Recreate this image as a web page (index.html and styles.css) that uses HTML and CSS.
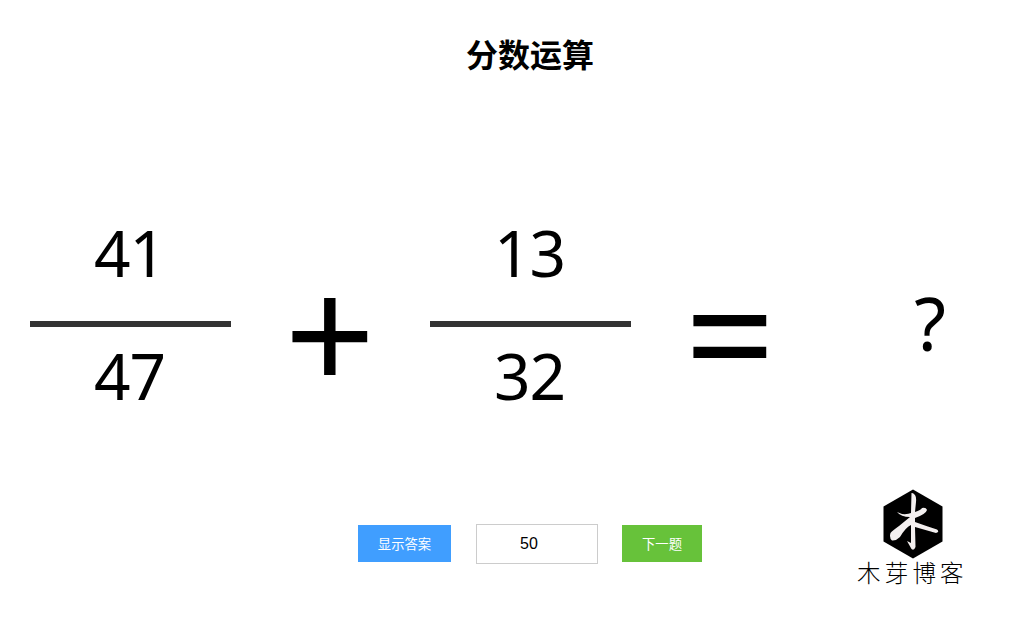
FILE: index.html
```html
<!DOCTYPE html>
<html lang="zh-CN">
<head>
<meta charset="utf-8">
<title>分数运算</title>
<link rel="stylesheet" href="styles.css">
</head>
<body>
<main class="page">
<h1 class="title">分数运算</h1>
<section class="equation">
<div class="fraction"><span class="number">41</span><span class="bar"></span><span class="number">47</span></div>
<div class="operator">+</div>
<div class="fraction"><span class="number">13</span><span class="bar"></span><span class="number">32</span></div>
<div class="operator">=</div>
<div class="result">?</div>
</section>
<div class="controls">
<button class="button primary">显示答案</button>
<input class="range" type="text" value="50">
<button class="button success">下一题</button>
</div>
</main>
<aside class="logo">
<svg class="logo-mark" viewBox="0 0 60 70" width="60" height="70"><path d="M30 .5 59.500 17.500V52.500L30 69.500.5 52.500V17.500Z"/><path class="brush" d="M28.500 4Q30 3.500 32 6Q33.500 8 33 13L32 23Q38 21 39 19Q43 18 44 21Q43 25 32 29V33Q43 37 54 40.500Q57 43 53 44L32 38 32.500 58Q31 62 28.500 60L24 52 28 54V36Q23 38 17 48Q13 52 9 51.500Q6 49 7.500 44Q9 42 16 37L27 28Q18 28 14 23L19 25Q25 25.500 28 24Z"/></svg>
<span class="logo-name">木芽博客</span>
</aside>
</body>
</html>
```
FILE: styles.css
```css
* { box-sizing: border-box; }
body { margin: 0; height: 619px; overflow: hidden; position: relative; background: #fff; color: #000; font-family: "Noto Sans", "Noto Sans CJK SC", sans-serif; }
.page { width: 1060px; }
.title { margin: 0; padding-top: 29px; height: 224px; font: 700 32px/48px "Noto Sans CJK SC", sans-serif; text-align: center; }
.equation { display: grid; grid-template-columns: 200px 200px 200px 200px 200px; padding-left: 30px; height: 299px; }
.fraction { display: grid; grid-template-rows: 97px 6px 97px; justify-items: center; height: 200px; }
.number { font-size: 64px; line-height: 57px; letter-spacing: -1px; padding-right: 2px; }
.bar { width: 201px; height: 6px; background: #333; }
.fraction .number:last-child { padding-top: 20px; }
.operator { font: 400 159px/215px "Noto Sans", sans-serif; text-align: center; }
.result { font-size: 73px; line-height: 198px; text-align: center; }
.controls { display: flex; justify-content: center; align-items: center; height: 42px; }
.button { height: 37px; margin-bottom: 2px; border: 0; color: #fff; font: 13.333px "Noto Sans CJK SC", sans-serif; padding: 0; }
.primary { width: 93px; background: #409eff; margin-right: 25px; }
.success { width: 80px; background: #67c23a; margin-left: 24px; }
.range { width: 122px; height: 40px; border: 1px solid #ccc; padding: 0 24px 0 8px; font: 16px "Liberation Sans", sans-serif; text-align: center; }
.logo { position: absolute; left: 857px; top: 489px; width: 112px; display: flex; flex-direction: column; }
.logo-mark { display: block; margin-left: 26px; }
.brush { fill: #f3efef; }
.logo-name { font: 300 23.5px/26px "Noto Sans CJK SC", sans-serif; letter-spacing: 4.2px; white-space: nowrap; }
```
